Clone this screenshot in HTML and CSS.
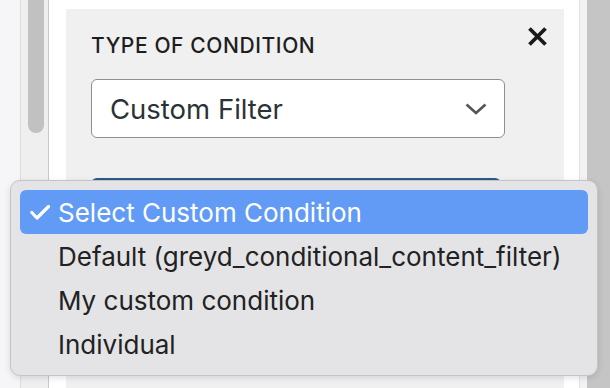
FILE: index.html
```html
<!DOCTYPE html>
<html>
<head>
<meta charset="utf-8">
<link rel="stylesheet" href="styles.css">
</head>
<body>
<div class="frame">
  <div class="gutter"></div>
  <div class="track"><div class="thumb"></div></div>
  <div class="main">
    <div class="panel">
      <div class="panel-head">
        <div class="label">TYPE OF CONDITION</div>
        <svg class="close" width="21" height="19" viewBox="0 0 21 19"><path d="M2.5 1.5 L18.5 17.5 M18.5 1.5 L2.5 17.5" stroke="#1a1a1a" stroke-width="3.8" stroke-linecap="butt" fill="none"/></svg>
      </div>
      <div class="select">
        <span class="select-text">Custom Filter</span>
        <svg class="chevron" width="22" height="12" viewBox="0 0 22 12"><path d="M1.5 1.5 L11 10 L20.5 1.5" stroke="#555" stroke-width="2.6" fill="none"/></svg>
      </div>
      <div class="select2"></div>
    </div>
  </div>
  <div class="edge"></div>
  <div class="rtrack"></div>
</div>
<div class="menu">
  <div class="item active">
    <svg class="check" width="20" height="15" viewBox="0 0 20 15"><path d="M1.8 7.5 L7 13 L18.5 1.5" stroke="#fff" stroke-width="3.2" fill="none" stroke-linecap="round" stroke-linejoin="round"/></svg>
    <span>Select Custom Condition</span>
  </div>
  <div class="item"><span>Default (greyd_conditional_content_filter)</span></div>
  <div class="item"><span>My custom condition</span></div>
  <div class="item"><span>Individual</span></div>
</div>
</body>
</html>
```
FILE: styles.css
```css
html, body {
  margin: 0;
  padding: 0;
}
body {
  width: 610px;
  height: 388px;
  overflow: hidden;
  background: #f5f5f7;
  font-family: Inter, "Liberation Sans", sans-serif;
  position: relative;
}
.frame {
  display: flex;
  height: 388px;
}
.gutter {
  width: 20px;
  flex: none;
  background: #f6f6f8;
  border-right: 1px solid #dcdcdc;
}
.track {
  width: 28px;
  flex: none;
  background: #efefef;
  border-right: 1px solid #c9c9c9;
  padding-left: 7px;
  box-sizing: border-box;
}
.thumb {
  width: 16px;
  height: 133px;
  background: #c1c1c1;
  border-radius: 0 0 8px 8px;
}
.main {
  width: 531px;
  flex: none;
  background: #ffffff;
  padding: 9px 15px 0 17px;
  box-sizing: border-box;
  border-right: 1px solid #e2e2e2;
  display: flex;
  flex-direction: column;
}
.panel {
  background: #f0f0f0;
  flex: 1;
  padding: 18px 16px 0 25px;
  box-sizing: border-box;
}
.panel-head {
  display: flex;
  justify-content: space-between;
  align-items: flex-start;
}
.label {
  font-size: 21px;
  font-weight: 500;
  color: #1e1e1e;
  line-height: 26px;
  padding-top: 6px;
  letter-spacing: 0.6px;
}
.close {
  display: block;
}
.select {
  margin-top: 20px;
  width: 414px;
  height: 59px;
  box-sizing: border-box;
  background: #fff;
  border: 1.5px solid #8c8f94;
  border-radius: 6px;
  display: flex;
  align-items: center;
  justify-content: space-between;
  padding: 0 17px 0 18px;
}
.select-text {
  font-size: 27.5px;
  color: #2c3338;
}
.chevron {
  display: block;
}
.select2 {
  margin-top: 40px;
  width: 410px;
  height: 59px;
  box-sizing: border-box;
  border-top: 2px solid #2b5b88;
  border-radius: 6px 6px 0 0;
  background: #fff;
}
.edge {
  width: 7px;
  flex: none;
  background: #f3f3f3;
}
.rtrack {
  flex: 1;
  background: #c5c5c5;
}
.menu {
  position: absolute;
  left: 10px;
  top: 180px;
  width: 588px;
  height: 196px;
  box-sizing: border-box;
  background: #e4e4e6;
  border: 1px solid #c4c4c6;
  border-radius: 10px;
  padding: 9px 9px;
  box-shadow: 0 2px 6px rgba(0,0,0,0.12);
}
.item {
  height: 44px;
  display: flex;
  align-items: center;
  padding-left: 38px;
  position: relative;
  font-size: 26px;
  color: #222;
  border-radius: 6px;
}
.item.active {
  background: #619bf6;
  color: #fff;
}
.check {
  position: absolute;
  left: 10px;
  top: 15px;
}
```
